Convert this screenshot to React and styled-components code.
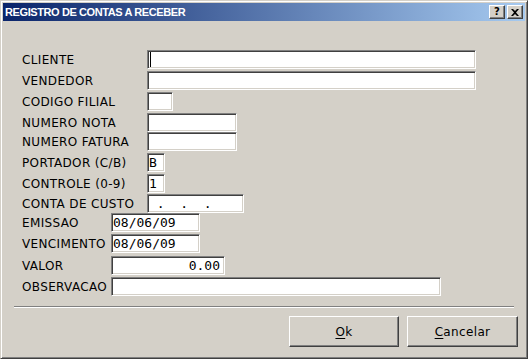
import React from 'react'
import styled, { createGlobalStyle } from 'styled-components'

const GlobalStyle = createGlobalStyle`
  html, body {
    margin: 0;
    padding: 0;
    background: #d4d0c8;
  }
`

const Window = styled.div`
  width: 528px;
  height: 359px;
  box-sizing: border-box;
  display: flex;
  flex-direction: column;
  padding: 2px;
  background: #d4d0c8;
  border: 1px solid;
  border-color: #d4d0c8 #404040 #404040 #d4d0c8;
  box-shadow: inset 1px 1px #ffffff, inset -1px -1px #808080;
`

const TitleBar = styled.div`
  height: 18px;
  flex: none;
  display: flex;
  align-items: center;
  padding: 0 2px 0 2px;
  background: linear-gradient(to right, #0a246a, #a6caf0);
`

const Title = styled.div`
  flex: 1;
  color: #fff;
  font-family: "Liberation Sans", Arial, sans-serif;
  font-weight: bold;
  font-size: 11px;
  letter-spacing: -0.4px;
  line-height: 18px;
  white-space: nowrap;
`

const CaptionButtons = styled.div`
  display: flex;
  gap: 2px;
`

const CaptionButton = styled.div`
  width: 16px;
  height: 14px;
  box-sizing: border-box;
  display: flex;
  align-items: center;
  justify-content: center;
  background: #d4d0c8;
  border: 1px solid;
  border-color: #ffffff #404040 #404040 #ffffff;
  box-shadow: inset -1px -1px #808080;
  color: #000;
  font-family: "DejaVu Sans", Verdana, sans-serif;
  font-weight: bold;
  font-size: 10px;
  line-height: 12px;
`

const Client = styled.div`
  flex: 1;
  display: flex;
  flex-direction: column;
  padding-top: 1px;
`

const Form = styled.div`
  display: flex;
  flex-direction: column;
  padding: 28px 0 0 19px;
`

const Row = styled.div`
  display: flex;
  align-items: center;
  height: 19px;
  margin-top: ${p => p.$gap}px;
`

const Label = styled.div`
  width: ${p => p.$width}px;
  flex: none;
  font-family: "DejaVu Sans", Verdana, sans-serif;
  font-size: 12px;
  letter-spacing: 0.35px;
  color: #000;
  white-space: nowrap;
`

const Field = styled.div`
  width: ${p => p.$width}px;
  height: 19px;
  flex: none;
  box-sizing: border-box;
  display: flex;
  align-items: center;
  justify-content: ${p => (p.$right ? 'flex-end' : 'flex-start')};
  padding: ${p => (p.$right ? '0 4px 0 1px' : '0 1px')};
  background: #fff;
  border: 1px solid;
  border-color: #808080 #ffffff #ffffff #808080;
  box-shadow: inset 1px 1px #404040, inset -1px -1px #d4d0c8;
  font-family: "DejaVu Sans Mono", "Liberation Mono", monospace;
  font-size: 13px;
  line-height: 15px;
  color: #000;
  white-space: pre;
`

const Caret = styled.span`
  display: block;
  width: 1px;
  height: 15px;
  margin-left: 1px;
  background: #000;
`

const Separator = styled.div`
  margin: 10px 11px 0 11px;
  height: 1px;
  border-top: 1px solid #808080;
  border-bottom: 1px solid #ffffff;
  height: 0;
`

const Buttons = styled.div`
  display: flex;
  justify-content: flex-end;
  gap: 8px;
  padding: 8px 7px 0 0;
`

const Button = styled.div`
  width: ${p => p.$width}px;
  height: 31px;
  box-sizing: border-box;
  display: flex;
  align-items: center;
  justify-content: center;
  background: #d4d0c8;
  border: 1px solid;
  border-color: #ffffff #404040 #404040 #ffffff;
  box-shadow: inset -1px -1px #808080;
  font-family: "DejaVu Sans", Verdana, sans-serif;
  font-size: 12px;
  letter-spacing: 0.35px;
  color: #000;

  u {
    text-decoration: underline;
    text-underline-offset: 2px;
  }
`

const fields = [
  { label: 'CLIENTE', lw: 125, w: 329, gap: 0, caret: true },
  { label: 'VENDEDOR', lw: 125, w: 329, gap: 2 },
  { label: 'CODIGO FILIAL', lw: 125, w: 26, gap: 2 },
  { label: 'NUMERO NOTA', lw: 125, w: 90, gap: 2 },
  { label: 'NUMERO FATURA', lw: 125, w: 90, gap: 0 },
  { label: 'PORTADOR (C/B)', lw: 125, w: 18, gap: 2, value: 'B' },
  { label: 'CONTROLE (0-9)', lw: 125, w: 18, gap: 2, value: '1' },
  { label: 'CONTA DE CUSTO', lw: 125, w: 97, gap: 1, value: ' .  .  .' },
  { label: 'EMISSAO', lw: 89, w: 89, gap: 0, value: '08/06/09' },
  { label: 'VENCIMENTO', lw: 89, w: 89, gap: 2, value: '08/06/09' },
  { label: 'VALOR', lw: 89, w: 114, gap: 3, value: '0.00', right: true },
  { label: 'OBSERVACAO', lw: 89, w: 330, gap: 2 },
]

const CloseGlyph = () => (
  <svg width="8" height="7" viewBox="0 0 8 7">
    <path d="M0 0h2l2 2 2-2h2L5 3.5 8 7H6L4 5 2 7H0l3-3.5z" fill="#000" />
  </svg>
)

export default function App() {
  return (
    <>
      <GlobalStyle />
      <Window>
        <TitleBar>
          <Title>REGISTRO DE CONTAS A RECEBER</Title>
          <CaptionButtons>
            <CaptionButton>?</CaptionButton>
            <CaptionButton><CloseGlyph /></CaptionButton>
          </CaptionButtons>
        </TitleBar>
        <Client>
          <Form>
            {fields.map(f => (
              <Row key={f.label} $gap={f.gap}>
                <Label $width={f.lw}>{f.label}</Label>
                <Field $width={f.w} $right={f.right}>
                  {f.caret ? <Caret /> : f.value}
                </Field>
              </Row>
            ))}
          </Form>
          <Separator />
          <Buttons>
            <Button $width={110}><span><u>O</u>k</span></Button>
            <Button $width={111}><span><u>C</u>ancelar</span></Button>
          </Buttons>
        </Client>
      </Window>
    </>
  )
}
